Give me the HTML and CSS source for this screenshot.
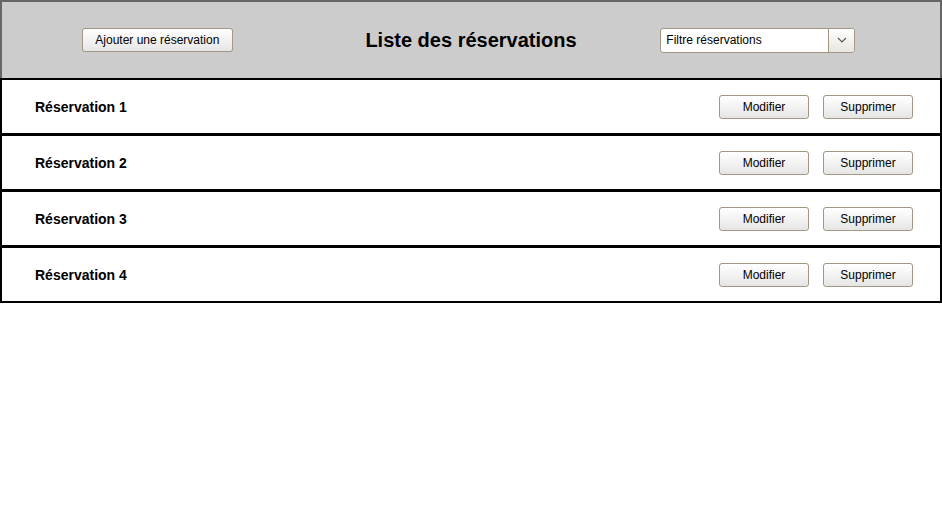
FILE: index.html
```html
<!DOCTYPE html>
<html lang="fr">
<head>
<meta charset="utf-8">
<title>Liste des réservations</title>
<link rel="stylesheet" href="styles.css">
</head>
<body>
<header class="topbar">
  <div class="cell cell-left"><button class="btn btn-add">Ajouter une réservation</button></div>
  <div class="cell cell-center"><h1 class="title">Liste des réservations</h1></div>
  <div class="cell cell-right">
    <div class="select">
      <span class="select-text">Filtre réservations</span>
      <span class="select-arrow">
        <svg width="10" height="6" viewBox="0 0 10 6"><path d="M1 1 L5 5 L9 1" fill="none" stroke="#555" stroke-width="1.1"/></svg>
      </span>
    </div>
  </div>
</header>
<main class="list">
  <div class="row"><span class="row-name">Réservation 1</span><div class="actions"><button class="btn btn-act">Modifier</button><button class="btn btn-act">Supprimer</button></div></div>
  <div class="row"><span class="row-name">Réservation 2</span><div class="actions"><button class="btn btn-act">Modifier</button><button class="btn btn-act">Supprimer</button></div></div>
  <div class="row"><span class="row-name">Réservation 3</span><div class="actions"><button class="btn btn-act">Modifier</button><button class="btn btn-act">Supprimer</button></div></div>
  <div class="row"><span class="row-name">Réservation 4</span><div class="actions"><button class="btn btn-act">Modifier</button><button class="btn btn-act">Supprimer</button></div></div>
</main>
</body>
</html>
```
FILE: styles.css
```css
html, body {
  margin: 0;
  padding: 0;
  background: #fff;
  font-family: "Liberation Sans", Arial, sans-serif;
  color: #000;
}

.topbar {
  box-sizing: border-box;
  width: 942px;
  height: 78px;
  background: #cccccc;
  border: 2px solid #666666;
  border-bottom: none;
  display: grid;
  grid-template-columns: 1fr 1fr 1fr;
  align-items: center;
}

.cell-left { justify-self: center; padding-right: 2px; }
.cell-center { justify-self: center; }
.cell-right { justify-self: start; padding-left: 33px; }

.title {
  margin: 0;
  font-size: 20px;
  font-weight: bold;
  line-height: 24px;
}

.btn {
  box-sizing: border-box;
  height: 24px;
  font-family: "Liberation Sans", Arial, sans-serif;
  font-size: 12px;
  color: #000;
  background: linear-gradient(#ffffff, #e6e6e6);
  border: 1px solid #a39683;
  border-radius: 3px;
  padding: 0 12px;
  margin: 0;
}

.btn-add { width: 151px; }

.select {
  box-sizing: border-box;
  width: 195px;
  height: 25px;
  display: flex;
  background: #fff;
  border: 1px solid #a39683;
  border-radius: 3px;
  font-size: 12px;
}

.select-text {
  flex: 1;
  display: flex;
  align-items: center;
  padding-left: 5px;
}

.select-arrow {
  width: 25px;
  display: flex;
  align-items: center;
  justify-content: center;
  border-left: 1px solid #a39683;
  background: linear-gradient(#ffffff, #e8e6e0);
  border-radius: 0 2px 2px 0;
}

.list {
  width: 942px;
}

.row {
  box-sizing: border-box;
  height: 57px;
  border: 2px solid #000;
  margin-top: -1px;
  display: flex;
  align-items: center;
  justify-content: space-between;
  padding: 0 27px 0 33px;
}

.row:first-child { margin-top: 0; }

.row-name {
  font-size: 14px;
  font-weight: bold;
}

.actions {
  display: flex;
  gap: 14px;
}

.btn-act { width: 90px; padding: 0; }
```
